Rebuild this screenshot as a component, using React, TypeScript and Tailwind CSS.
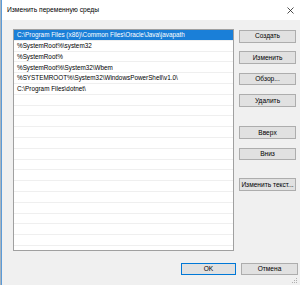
import React from "react";

const rows = [
  "C:\\Program Files (x86)\\Common Files\\Oracle\\Java\\javapath",
  "%SystemRoot%\\system32",
  "%SystemRoot%",
  "%SystemRoot%\\System32\\Wbem",
  "%SYSTEMROOT%\\System32\\WindowsPowerShell\\v1.0\\",
  "C:\\Program Files\\dotnet\\",
];

function Btn({ label, className = "", primary = false }: { label: string; className?: string; primary?: boolean }) {
  return (
    <div
      className={`h-[12.7px] flex items-center justify-center bg-[#e1e1e1] border text-black whitespace-nowrap overflow-hidden ${
        primary ? "border-[#0078d7]" : "border-[#adadad]"
      } ${className}`}
    >
      {label}
    </div>
  );
}

export default function App() {
  const allRows = Array.from({ length: 21 }, (_, i) => rows[i] ?? "");
  return (
    <div className="w-[300px] h-[285px] overflow-hidden flex [font-family:'Liberation_Sans',Arial,sans-serif] text-[6.6px] text-black">
      <div className="w-[1px] h-full bg-[#a9b4be]" />
      <div className="flex-1 h-full flex flex-col border-l border-[#5b9bd8] bg-[#f0f0f0] relative">
        {/* title bar */}
        <div className="h-[20px] bg-white flex items-center justify-between pl-[5px] pr-[5px] shrink-0">
          <span className="text-[6.7px] text-black">Изменить переменную среды</span>
          <svg width="7" height="7" viewBox="0 0 7 7" className="mr-[1px]">
            <path d="M0.5 0.5 L6.5 6.5 M6.5 0.5 L0.5 6.5" stroke="#222" strokeWidth="0.8" />
          </svg>
        </div>
        {/* body */}
        <div className="flex pl-[11px] pt-[9px]">
          <div className="w-[221px] h-[222px] border border-[#a0a0a0] bg-white overflow-hidden text-[6.35px]">
            {allRows.map((r, i) => (
              <div
                key={i}
                className={`h-[10.8px] border-b border-[#efefef] pl-[3px] flex items-center whitespace-nowrap overflow-hidden ${
                  i === 0 ? "bg-[#1a7fd8] text-white" : ""
                }`}
              >
                {r}
              </div>
            ))}
          </div>
          <div className="ml-[5px] w-[57px] pt-[1px] flex flex-col">
            <Btn label="Создать" />
            <Btn label="Изменить" className="mt-[8.7px]" />
            <Btn label="Обзор..." className="mt-[8.7px]" />
            <Btn label="Удалить" className="mt-[8.7px]" />
            <Btn label="Вверх" className="mt-[19.6px]" />
            <Btn label="Вниз" className="mt-[8.7px]" />
            <Btn label="Изменить текст..." className="mt-[17.9px]" />
          </div>
        </div>
        <div className="flex justify-end pr-[2px] mt-[11.7px] gap-[5px]">
          <Btn label="OK" primary className="w-[55px]" />
          <Btn label="Отмена" className="w-[57px]" />
        </div>
        <svg width="6" height="6" viewBox="0 0 6 6" className="absolute right-[2px] bottom-[1px]">
          <rect x="4" y="0" width="1" height="1" fill="#b0b0b0" />
          <rect x="2" y="2" width="1" height="1" fill="#b0b0b0" />
          <rect x="4" y="2" width="1" height="1" fill="#b0b0b0" />
          <rect x="0" y="4" width="1" height="1" fill="#b0b0b0" />
          <rect x="2" y="4" width="1" height="1" fill="#b0b0b0" />
          <rect x="4" y="4" width="1" height="1" fill="#b0b0b0" />
        </svg>
      </div>
    </div>
  );
}
